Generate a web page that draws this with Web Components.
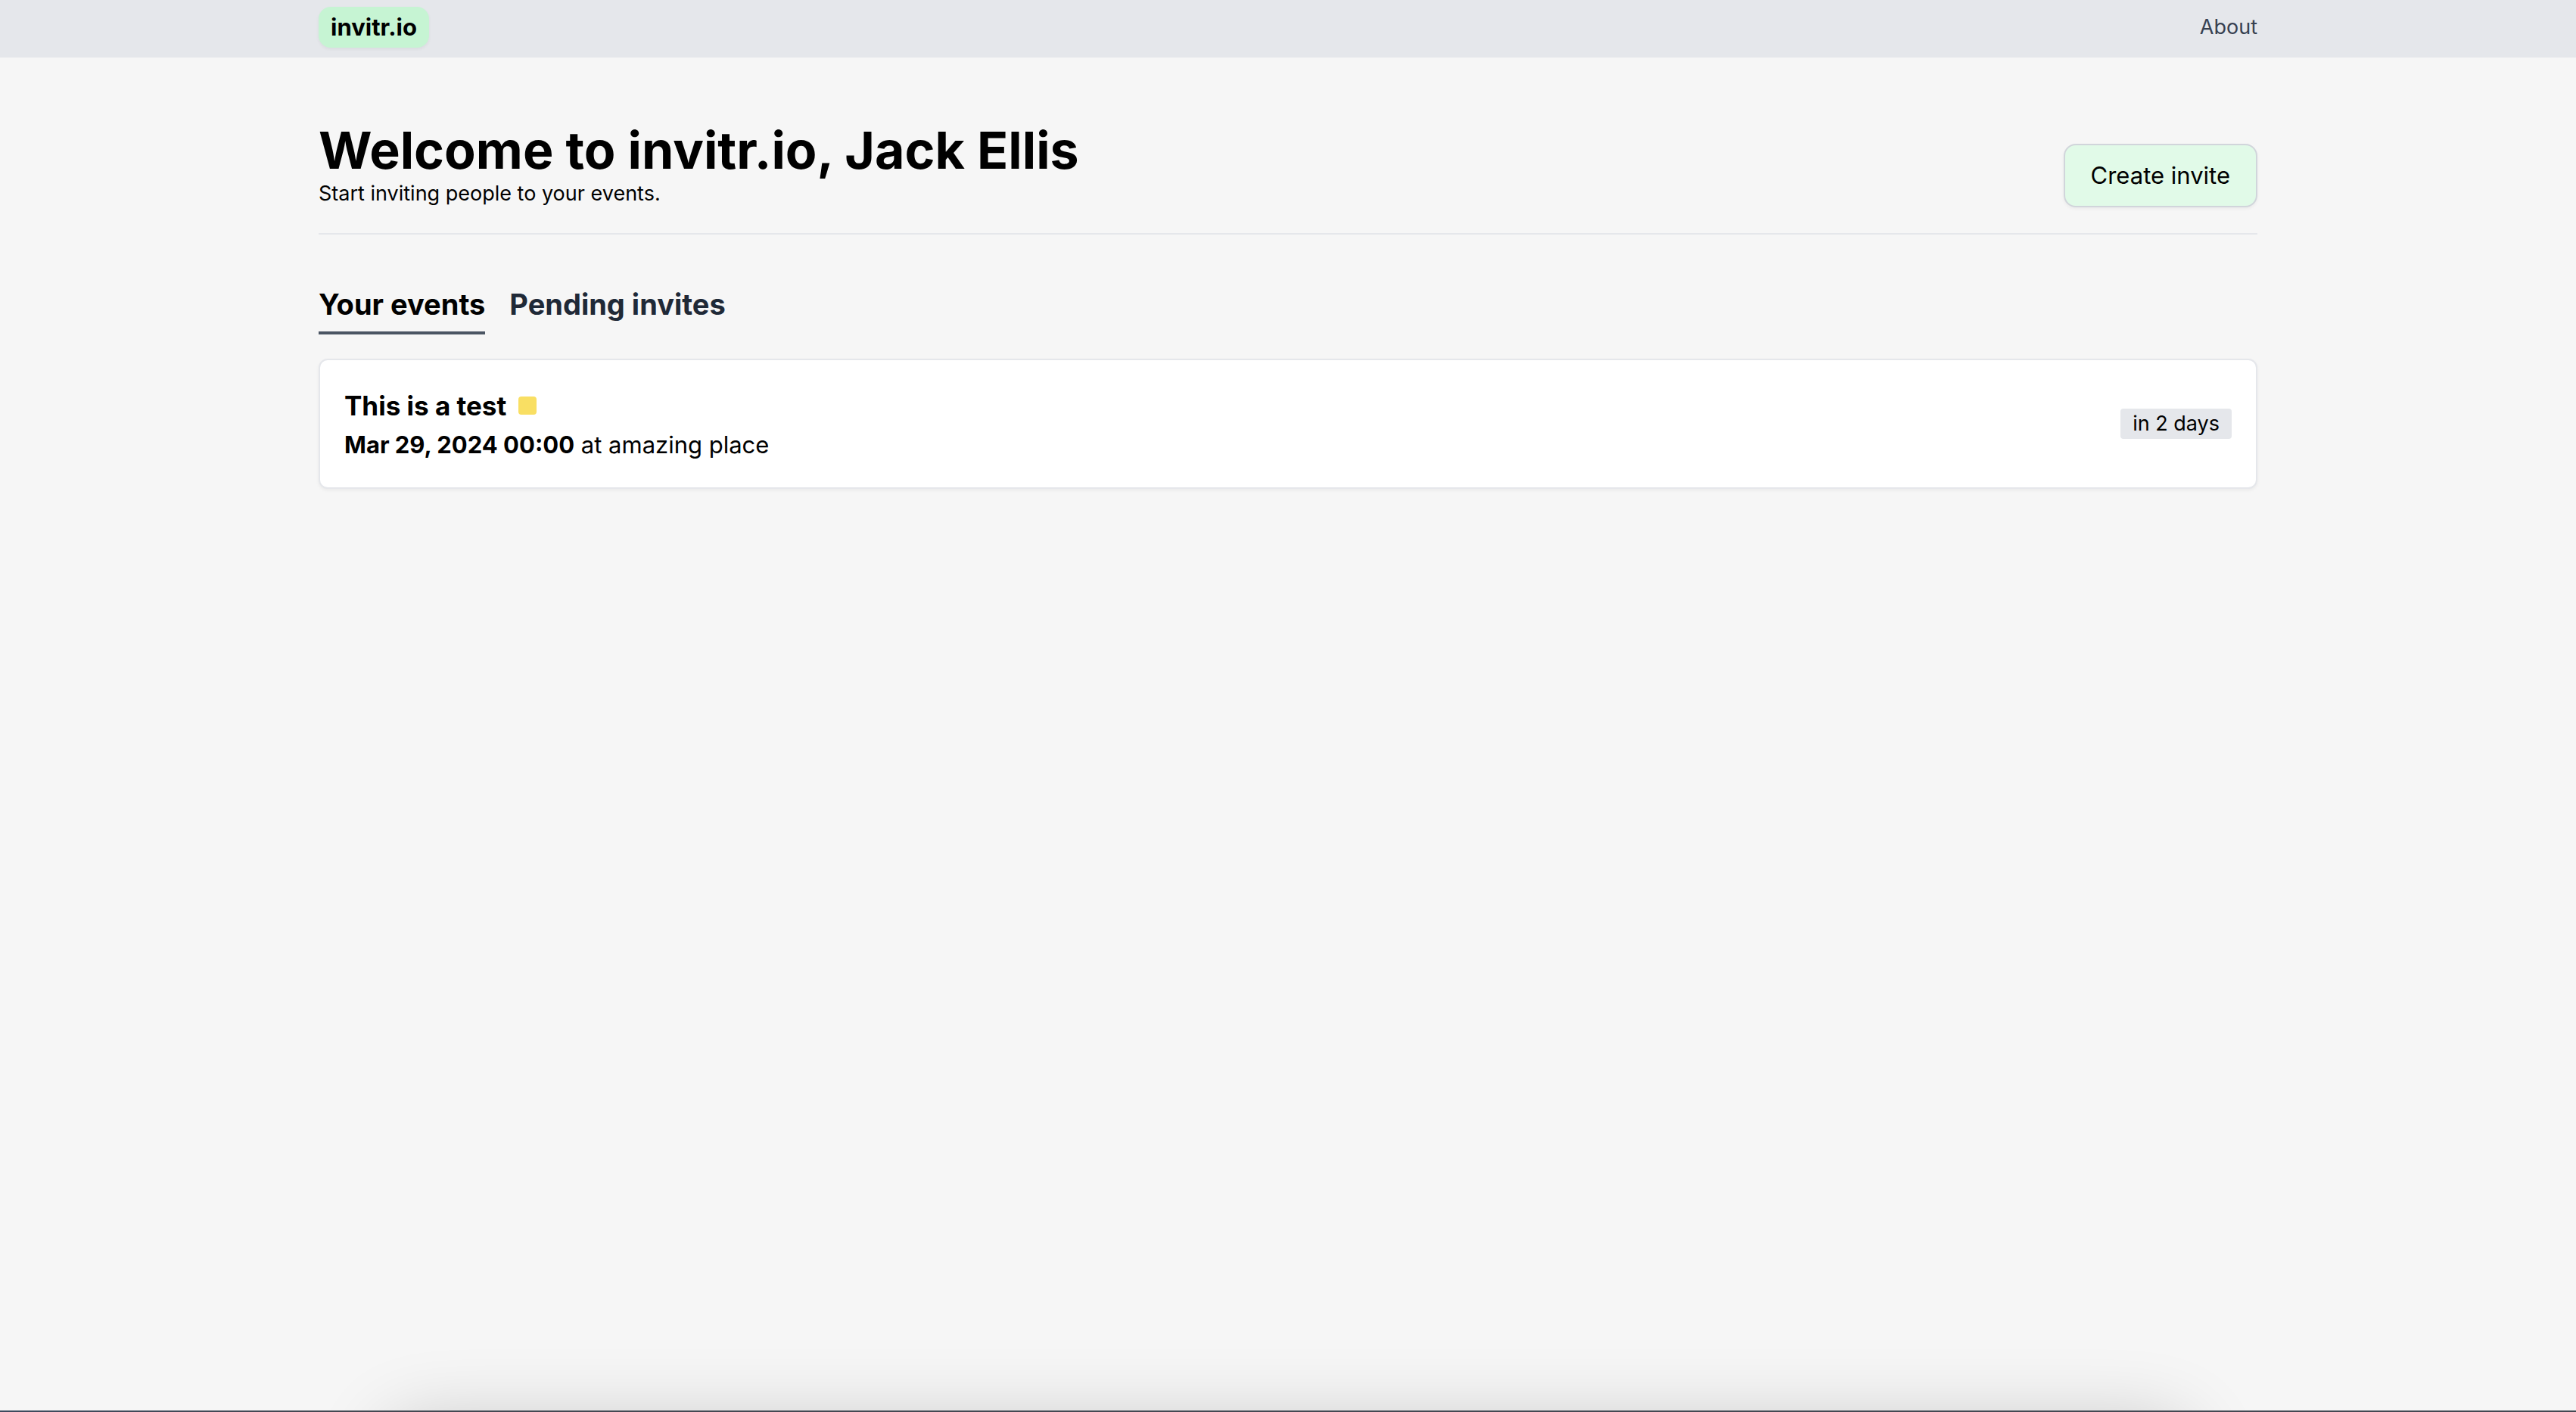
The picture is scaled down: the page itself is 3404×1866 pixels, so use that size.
<!DOCTYPE html>
<html lang="en">
<head>
<meta charset="utf-8">
<meta name="viewport" content="width=device-width, initial-scale=1">
<title>invitr.io</title>
<style>
  html, body { height: 100%; margin: 0; }
  body { font-family: Inter, "Liberation Sans", sans-serif; color: #000; background: #f6f6f6; }
</style>
</head>
<body>
<invitr-app></invitr-app>
<script>
const define = (name, html) => customElements.define(name, class extends HTMLElement {
  constructor() {
    super();
    this.attachShadow({ mode: "open" }).innerHTML =
      `<style>*, *::before { box-sizing: border-box; } a { color: inherit; text-decoration: none; }</style>${html}`;
  }
});

define("page-container", `
  <style>:host { display: block; width: 100%; max-width: 2562px; margin: 0 auto; }</style>
  <slot></slot>`);

define("site-nav", `
  <style>
    :host { display: block; background: #e5e7eb; padding: 9px 0 13px; }
    nav { display: flex; align-items: center; justify-content: space-between; }
    .logo { padding: 8px 16px; border-radius: 16px; background: #c6f4d3; font-size: 31px; line-height: 38px;
      font-weight: 700; box-shadow: 0 2px 4px rgba(0, 0, 0, .05); }
    .link { font-size: 27px; line-height: 40px; color: #374151; }
  </style>
  <page-container><nav>
    <a class="logo" href="#home">invitr.io</a>
    <a class="link" href="#about">About</a>
  </nav></page-container>`);

define("action-button", `
  <style>
    :host { display: block; flex: none; }
    button { display: block; padding: 16px 34px; border: 2px solid #d1d5db; border-radius: 16px; background: #e1fae8;
      font: inherit; font-size: 31px; line-height: 48px; color: #000; box-shadow: 0 2px 4px rgba(0, 0, 0, .05); }
  </style>
  <button type="button"><slot></slot></button>`);

define("page-header", `
  <style>
    :host { display: flex; align-items: flex-end; justify-content: space-between; gap: 32px;
      padding: 82px 0 34px; border-bottom: 2px solid #e5e7eb; }
    h1 { margin: 0; font-size: 68px; line-height: 80px; font-weight: 700; }
    p { margin: 0; font-size: 27px; line-height: 36px; }
  </style>
  <div>
    <h1><slot name="title"></slot></h1>
    <p><slot name="lead"></slot></p>
  </div>
  <slot></slot>`);

define("tab-link", `
  <style>
    :host { display: block; }
    a { display: block; padding-bottom: 8px; border-bottom: 4px solid transparent;
      font-size: 38px; line-height: 56px; font-weight: 700; color: #1f2937; }
    :host([active]) a { color: #000; border-color: #4b5563; }
  </style>
  <a href="#tab"><slot></slot></a>`);

define("tab-bar", `
  <style>:host { display: flex; gap: 32px; padding: 64px 0 32px; }</style>
  <slot></slot>`);

define("event-card", `
  <style>
    :host { display: flex; align-items: center; justify-content: space-between; gap: 32px; padding: 32px;
      border: 2px solid #e5e7eb; border-radius: 12px; background: #fff; box-shadow: 0 2px 4px rgba(0, 0, 0, .05);
      box-sizing: border-box; }
    .title { display: flex; align-items: center; gap: 16px; }
    h2 { margin: 0; font-size: 35px; line-height: 56px; font-weight: 700; }
    .status { width: 24px; height: 24px; border-radius: 4px; background: #f9df63; }
    p { margin: 0; font-size: 31px; line-height: 48px; }
    .due { flex: none; padding: 0 16px; border-radius: 4px; background: #e5e7eb; font-size: 27px; line-height: 40px; }
  </style>
  <div>
    <div class="title"><h2><slot name="title"></slot></h2><span class="status"></span></div>
    <p><slot></slot></p>
  </div>
  <span class="due"><slot name="due"></slot></span>`);

define("window-edge", `
  <style>
    :host { position: fixed; inset: auto 0 0 0; height: 120px; overflow: hidden; pointer-events: none; }
    .shade { position: absolute; top: calc(100% + 14px); left: 15%; right: 15%; height: 300px; border-radius: 40px;
      box-shadow: 0 0 100px rgba(0, 0, 0, .2); }
    .bar { position: absolute; inset: auto 0 0 0; height: 2px;
      background: linear-gradient(90deg, #3d4a5e, #434852 12%, #434852); }
  </style>
  <div class="shade"></div><div class="bar"></div>`);

define("invitr-app", `
  <style>:host { display: block; min-height: 100%; }</style>
  <site-nav></site-nav>
  <page-container>
    <page-header>
      <span slot="title">Welcome to invitr.io, Jack Ellis</span>
      <span slot="lead">Start inviting people to your events.</span>
      <action-button>Create invite</action-button>
    </page-header>
    <tab-bar>
      <tab-link active>Your events</tab-link>
      <tab-link>Pending invites</tab-link>
    </tab-bar>
    <event-card>
      <span slot="title">This is a test</span>
      <b>Mar 29, 2024 00:00</b> at amazing place
      <span slot="due">in 2 days</span>
    </event-card>
  </page-container>
  <window-edge></window-edge>`);
</script>
</body>
</html>
